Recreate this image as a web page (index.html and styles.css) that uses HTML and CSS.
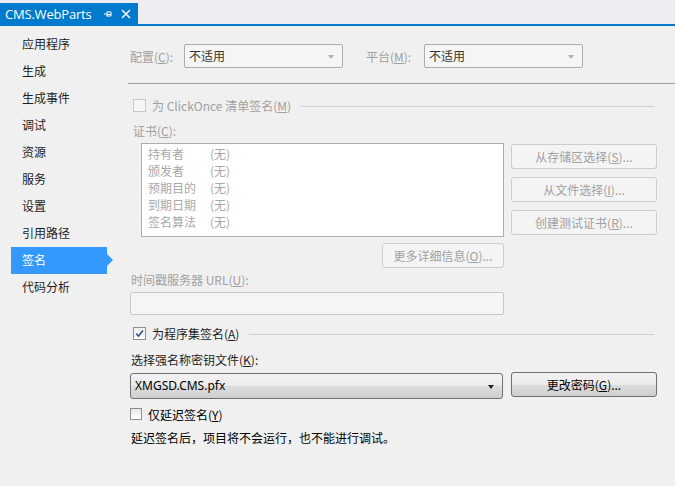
FILE: index.html
```html
<!DOCTYPE html>
<html>
<head>
  <title>CMS.WebParts</title>
  <link rel="stylesheet" href="styles.css">
</head>
<body>
  <div class="tabstrip">
    <div class="tab">
      <span class="tab-title">CMS.WebParts</span>
      <svg class="pin" viewBox="0 0 10 10" width="10" height="10">
        <path d="M1 5h3M4 2.5v5M4 3h4v4H4M4 5.5h4" stroke="white" stroke-width="1" fill="none"/>
      </svg>
      <svg class="close" viewBox="0 0 10 10" width="10" height="10">
        <path d="M1 1L9 9M9 1L1 9" stroke="white" stroke-width="1.5"/>
      </svg>
    </div>
  </div>

  <div class="page">
    <ul class="nav">
      <li>应用程序</li>
      <li>生成</li>
      <li>生成事件</li>
      <li>调试</li>
      <li>资源</li>
      <li>服务</li>
      <li>设置</li>
      <li>引用路径</li>
      <li class="active">签名</li>
      <li>代码分析</li>
    </ul>

    <div class="main">
      <div class="config-row">
        <span class="label dim cfg-label">配置(<u>C</u>):</span>
        <div class="select disabled"><span>不适用</span><i class="arrow"></i></div>
        <span class="label dim plat-label">平台(<u>M</u>):</span>
        <div class="select disabled"><span>不适用</span><i class="arrow"></i></div>
      </div>
      <div class="sep"></div>

      <div class="group-head dim first-group">
        <span class="check"></span>
        <span class="group-text">为 ClickOnce 清单签名(<u>M</u>)</span>
        <span class="group-line"></span>
      </div>

      <div class="row-label dim cert-label">证书(<u>C</u>):</div>
      <div class="cert">
        <div class="cert-list">
          <div class="cert-row"><span class="k">持有者</span><span>(无)</span></div>
          <div class="cert-row"><span class="k">颁发者</span><span>(无)</span></div>
          <div class="cert-row"><span class="k">预期目的</span><span>(无)</span></div>
          <div class="cert-row"><span class="k">到期日期</span><span>(无)</span></div>
          <div class="cert-row"><span class="k">签名算法</span><span>(无)</span></div>
        </div>
        <div class="cert-buttons">
          <div class="btn disabled">从存储区选择(<u>S</u>)...</div>
          <div class="btn disabled">从文件选择(<u>I</u>)...</div>
          <div class="btn disabled">创建测试证书(<u>R</u>)...</div>
        </div>
      </div>
      <div class="details-row">
        <div class="btn disabled details">更多详细信息(<u>O</u>)...</div>
      </div>

      <div class="row-label dim url-label">时间戳服务器 URL(<u>U</u>):</div>
      <div class="textbox"></div>

      <div class="group-head sign-group">
        <span class="check checked">
          <svg viewBox="0 0 9 9" width="9" height="9"><path d="M1 4.5L3.5 7L8 1.5" stroke="#2b4f86" stroke-width="1.6" fill="none"/></svg>
        </span>
        <span class="group-text">为程序集签名(<u>A</u>)</span>
        <span class="group-line"></span>
      </div>

      <div class="row-label key-label">选择强名称密钥文件(<u>K</u>):</div>
      <div class="key-row">
        <div class="combo"><span>XMGSD.CMS.pfx</span><i class="arrow dark"></i></div>
        <div class="btn change">更改密码(<u>G</u>)...</div>
      </div>

      <div class="delay-row">
        <span class="check small"></span>
        <span>仅延迟签名(<u>Y</u>)</span>
      </div>
      <div class="note">延迟签名后，项目将不会运行，也不能进行调试。</div>
    </div>
  </div>
</body>
</html>
```

FILE: styles.css
```css
body {
  margin: 0;
  background-color: #f0f0f0;
  font-family: "Noto Sans CJK SC", "Noto Sans", sans-serif;
  font-size: 12px;
  color: #1e1e1e;
  width: 675px;
  height: 486px;
  overflow: hidden;
}
u {
  text-decoration: underline;
  text-underline-offset: 1px;
}
.dim {
  color: #a0a0a0;
}

/* tab strip */
.tabstrip {
  height: 26px;
  padding-top: 3px;
  box-sizing: border-box;
  border-bottom: 2px solid #007acc;
  background-color: #eeeef2;
}
.tab {
  display: flex;
  align-items: center;
  width: 138px;
  height: 21px;
  background-color: #007acc;
  color: white;
  box-sizing: border-box;
  padding-left: 5px;
}
.tab-title {
  font-family: "Open Sans", "Noto Sans", sans-serif;
  font-size: 13px;
  letter-spacing: -0.2px;
}
.pin {
  margin-left: 12px;
}
.close {
  margin-left: 8px;
}

/* layout */
.page {
  display: flex;
}
.nav {
  list-style: none;
  margin: 0;
  padding: 5px 0 0 0;
  width: 128px;
  flex-shrink: 0;
}
.nav li {
  position: relative;
  height: 27px;
  line-height: 26px;
  margin-left: 11px;
  width: 96px;
  padding-left: 11px;
  box-sizing: border-box;
  font-size: 12px;
}
.nav li.active {
  background-color: #3399ff;
  color: white;
}
.nav li.active::after {
  content: "";
  position: absolute;
  right: -6px;
  top: 7px;
  border-top: 6px solid transparent;
  border-bottom: 6px solid transparent;
  border-left: 6px solid #3399ff;
}
.main {
  flex: 1;
}

/* config row */
.config-row {
  display: flex;
  align-items: center;
  margin-top: 18px;
  height: 24px;
}
.cfg-label {
  margin-left: 2px;
  width: 54px;
}
.plat-label {
  margin-left: 23px;
  width: 58px;
}
.select {
  position: relative;
  width: 159px;
  height: 24px;
  box-sizing: border-box;
  border: 1px solid #acacac;
  border-radius: 2px;
  background-color: #f5f5f5;
  padding-left: 4px;
  line-height: 22px;
  color: #333;
}
.arrow {
  position: absolute;
  right: 8px;
  top: 10px;
  border-left: 3.5px solid transparent;
  border-right: 3.5px solid transparent;
  border-top: 4px solid #b0b0b0;
}
.arrow.dark {
  border-top-color: #222;
  top: 11px;
}
.sep {
  margin-top: 15px;
  height: 1px;
  background-color: #a0a0a0;
}

/* group headers */
.group-head {
  display: flex;
  align-items: center;
  height: 17px;
  padding-left: 5px;
  padding-right: 21px;
}
.first-group {
  margin-top: 13px;
}
.sign-group {
  margin-top: 10px;
}
.check {
  width: 13px;
  height: 13px;
  box-sizing: border-box;
  border: 1px solid #c8c8c8;
  background-color: #f6f6f6;
  display: flex;
  align-items: center;
  justify-content: center;
}
.check.checked {
  border-color: #8e8f8f;
  background: linear-gradient(#f0f0f0, #ffffff);
}
.group-text {
  margin-left: 6px;
}
.group-line {
  flex: 1;
  height: 1px;
  background-color: #d0d0d0;
  margin-left: 10px;
  margin-top: 2px;
}
.row-label {
  height: 16px;
  line-height: 16px;
  padding-left: 3px;
}
.cert-label {
  margin-top: 9px;
  padding-left: 5px;
}

/* certificate */
.cert {
  display: flex;
  margin-top: 4px;
}
.cert-list {
  margin-left: 13px;
  width: 363px;
  height: 94px;
  box-sizing: border-box;
  border: 1px solid #acacac;
  background-color: white;
  padding: 1px 0 0 6px;
}
.cert-row {
  display: flex;
  height: 17px;
  line-height: 17px;
  color: #a8a8a8;
}
.cert-row .k {
  width: 62px;
}
.cert-buttons {
  margin-left: 7px;
  display: flex;
  flex-direction: column;
  gap: 8px;
  margin-top: 1px;
}
.btn {
  width: 146px;
  height: 25px;
  box-sizing: border-box;
  border: 1px solid #707070;
  border-radius: 3px;
  text-align: center;
  line-height: 23px;
  background: linear-gradient(#f2f2f2 0%, #ebebeb 50%, #dddddd 51%, #cfcfcf 100%);
}
.btn.disabled {
  border-color: #cdcdcd;
  background: #f4f4f4;
  color: #a0a0a0;
}
.details-row {
  margin-top: 6px;
  padding-left: 254px;
}
.btn.details {
  width: 122px;
}
.url-label {
  margin-top: 4px;
}
.textbox {
  margin-top: 4px;
  margin-left: 2px;
  width: 374px;
  height: 23px;
  box-sizing: border-box;
  border: 1px solid #c8c8c8;
  border-radius: 2px;
  background-color: #f5f5f5;
}

/* key file */
.key-label {
  margin-top: 10px;
}
.key-row {
  display: flex;
  align-items: flex-start;
  margin-top: 5px;
  padding-left: 2px;
}
.combo {
  position: relative;
  width: 373px;
  height: 26px;
  box-sizing: border-box;
  border: 1px solid #707070;
  border-radius: 3px;
  background: linear-gradient(#f2f2f2 0%, #ebebeb 50%, #dddddd 51%, #cfcfcf 100%);
  padding-left: 4px;
  line-height: 24px;
  font-family: "Noto Sans", sans-serif;
  font-size: 12px;
  color: #000;
}
.btn.change {
  margin-left: 8px;
  margin-top: -1px;
  color: #000;
}
.delay-row {
  display: flex;
  align-items: center;
  height: 16px;
  margin-top: 7px;
  padding-left: 2px;
  color: #000;
}
.check.small {
  width: 12px;
  height: 12px;
  border-color: #8e8f8f;
  background: linear-gradient(#e8e8e8, #ffffff);
  margin-right: 6px;
}
.note {
  margin-top: 8px;
  padding-left: 3px;
  height: 16px;
  line-height: 16px;
  color: #000;
}
```
